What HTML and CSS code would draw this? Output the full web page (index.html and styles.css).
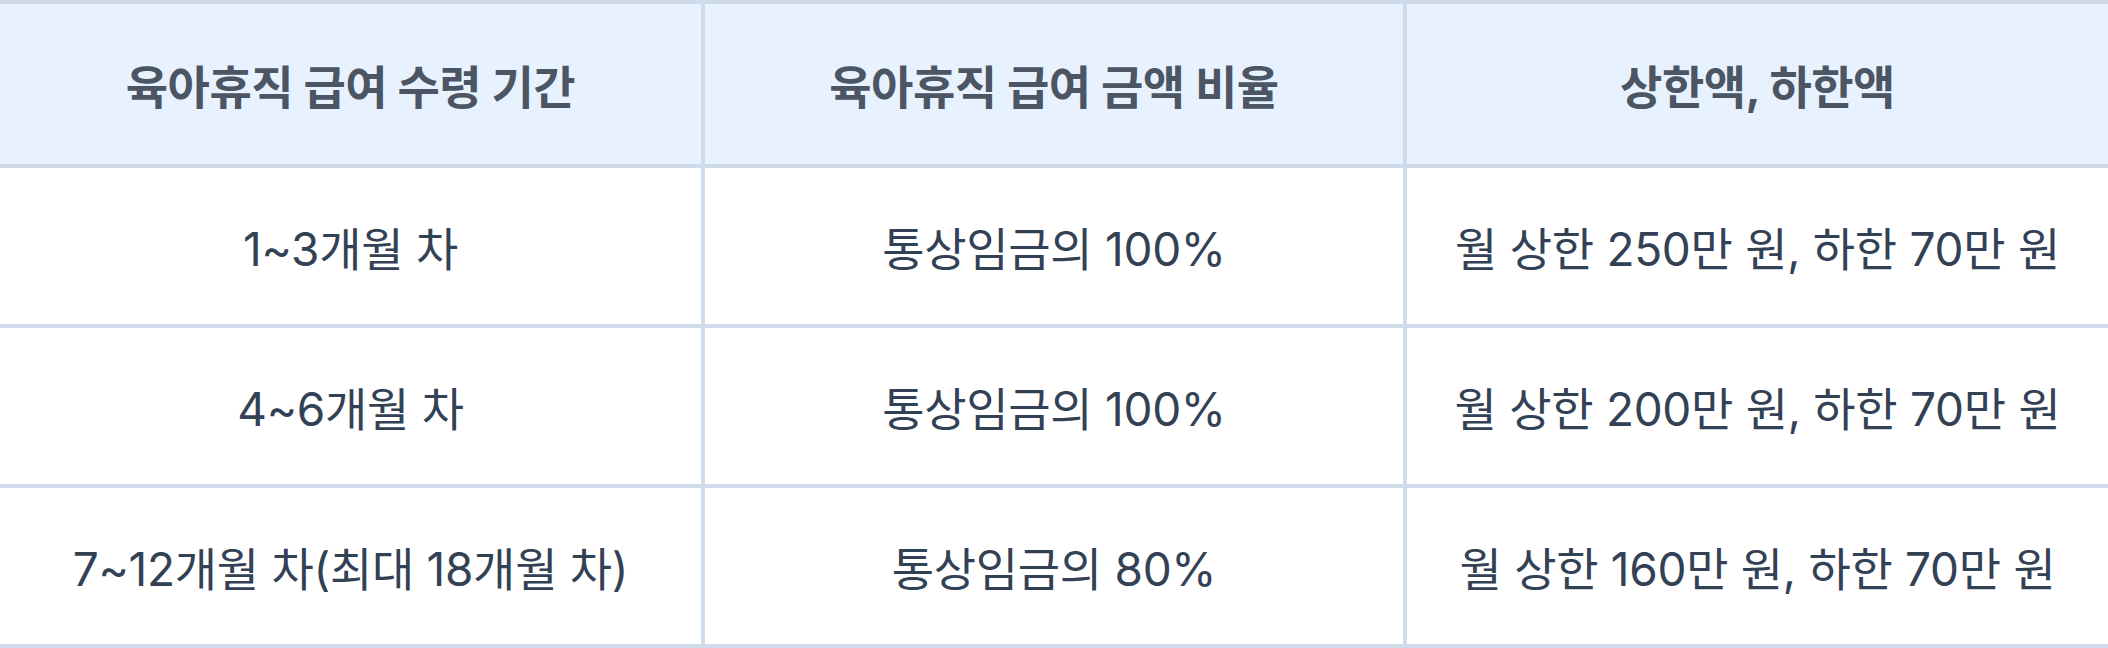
FILE: index.html
```html
<!DOCTYPE html>
<html lang="ko">
<head>
<meta charset="utf-8">
<title>육아휴직 급여</title>
<link rel="stylesheet" href="styles.css">
</head>
<body>
<div class="table" role="table">
  <div class="cell head" role="columnheader">육아휴직 급여 수령 기간</div>
  <div class="cell head" role="columnheader">육아휴직 급여 금액 비율</div>
  <div class="cell head" role="columnheader">상한액, 하한액</div>

  <div class="cell" role="cell">1~3개월 차</div>
  <div class="cell" role="cell">통상임금의 100%</div>
  <div class="cell" role="cell">월 상한 250만 원, 하한 70만 원</div>

  <div class="cell" role="cell">4~6개월 차</div>
  <div class="cell" role="cell">통상임금의 100%</div>
  <div class="cell" role="cell">월 상한 200만 원, 하한 70만 원</div>

  <div class="cell" role="cell">7~12개월 차(최대 18개월 차)</div>
  <div class="cell" role="cell">통상임금의 80%</div>
  <div class="cell" role="cell">월 상한 160만 원, 하한 70만 원</div>
</div>
</body>
</html>
```
FILE: styles.css
```css
html, body {
  margin: 0;
  padding: 0;
  background: #ffffff;
}

body {
  font-family: Inter, "Noto Sans CJK KR", sans-serif;
}

.table {
  width: 2108px;
  display: grid;
  grid-template-columns: 701px 698px 701px;
  grid-template-rows: 160px 156px 156px 156px;
  gap: 4px;
  padding: 4px 0;
  background: #cfdbea;
}

.cell {
  display: flex;
  align-items: center;
  justify-content: center;
  background: #ffffff;
  color: #334155;
  font-size: 46px;
  font-weight: 400;
  letter-spacing: -0.3px;
  white-space: nowrap;
}

.cell.head {
  background: #e8f2fe;
  color: #4b5563;
  font-size: 46px;
  font-weight: 700;
  letter-spacing: -0.5px;
}
```
